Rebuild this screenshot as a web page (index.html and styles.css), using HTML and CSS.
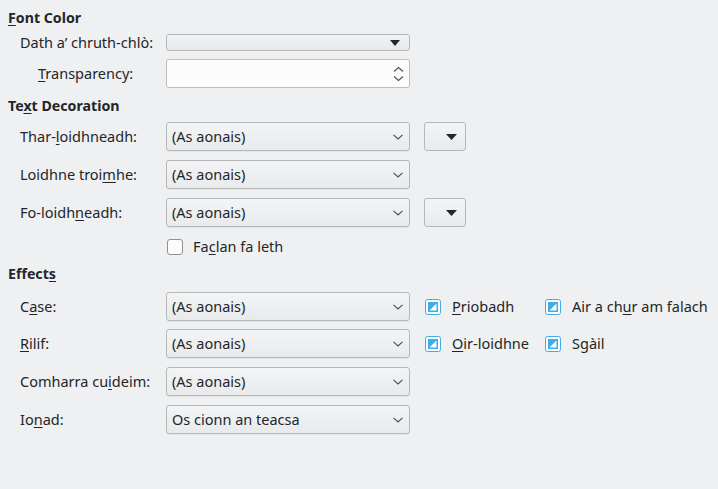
FILE: index.html
```html
<!DOCTYPE html>
<html>
<head>
<meta charset="utf-8">
<link rel="stylesheet" href="styles.css">
</head>
<body>
<div class="page">
  <div class="heading h-font"><u>F</u>ont Color</div>
  <div class="row r-dath">
    <div class="label">Dath a’ chruth-chlò:</div>
    <div class="colorbar"><svg class="tri" width="10" height="6" viewBox="0 0 10 6"><polygon points="0,0 10,0 5,6" fill="#232629"/></svg></div>
  </div>
  <div class="row r-trans">
    <div class="label indent"><u>T</u>ransparency:</div>
    <div class="spin">
      <svg class="spin-arrows" width="11" height="16" viewBox="0 0 11 16"><polyline points="1,5.5 5.5,1.5 10,5.5" fill="none" stroke="#4d4d4d" stroke-width="1.1"/><polyline points="1,10.5 5.5,14.5 10,10.5" fill="none" stroke="#4d4d4d" stroke-width="1.1"/></svg>
    </div>
  </div>

  <div class="heading h-deco">Te<u>x</u>t Decoration</div>
  <div class="row r-first">
    <div class="label">Thar-<u>l</u>oidhneadh:</div>
    <div class="select"><span>(As aonais)</span><svg class="chev" width="10" height="6" viewBox="0 0 10 6"><polyline points="0.5,0.8 5,5 9.5,0.8" fill="none" stroke="#4d4d4d" stroke-width="1.1"/></svg></div>
    <div class="colorbtn"><svg width="11" height="6" viewBox="0 0 11 6"><polygon points="0,0 11,0 5.5,6" fill="#232629"/></svg></div>
  </div>
  <div class="row r-next">
    <div class="label">Loidhne troi<u>m</u>he:</div>
    <div class="select"><span>(As aonais)</span><svg class="chev" width="10" height="6" viewBox="0 0 10 6"><polyline points="0.5,0.8 5,5 9.5,0.8" fill="none" stroke="#4d4d4d" stroke-width="1.1"/></svg></div>
  </div>
  <div class="row r-next">
    <div class="label">Fo-loidh<u>n</u>eadh:</div>
    <div class="select"><span>(As aonais)</span><svg class="chev" width="10" height="6" viewBox="0 0 10 6"><polyline points="0.5,0.8 5,5 9.5,0.8" fill="none" stroke="#4d4d4d" stroke-width="1.1"/></svg></div>
    <div class="colorbtn"><svg width="11" height="6" viewBox="0 0 11 6"><polygon points="0,0 11,0 5.5,6" fill="#232629"/></svg></div>
  </div>
  <div class="row r-check">
    <div class="label"></div>
    <div class="check"><span class="box"></span><span class="txt">Fa<u>c</u>lan fa leth</span></div>
  </div>

  <div class="heading h-eff">Effect<u>s</u></div>
  <div class="row r-first2">
    <div class="label">C<u>a</u>se:</div>
    <div class="select"><span>(As aonais)</span><svg class="chev" width="10" height="6" viewBox="0 0 10 6"><polyline points="0.5,0.8 5,5 9.5,0.8" fill="none" stroke="#4d4d4d" stroke-width="1.1"/></svg></div>
    <div class="opts">
      <div class="tcheck"><svg width="16" height="16" viewBox="0 0 16 16"><rect x="0.5" y="0.5" width="15" height="15" rx="2" fill="#fcfcfc" stroke="#3daee9"/><rect x="3" y="3" width="10" height="10" fill="#3daee9"/><polygon points="11.5,4.5 11.5,11.5 4.5,11.5" fill="#fcfcfc"/></svg><span class="txt"><u>P</u>riobadh</span></div>
      <div class="tcheck"><svg width="16" height="16" viewBox="0 0 16 16"><rect x="0.5" y="0.5" width="15" height="15" rx="2" fill="#fcfcfc" stroke="#3daee9"/><rect x="3" y="3" width="10" height="10" fill="#3daee9"/><polygon points="11.5,4.5 11.5,11.5 4.5,11.5" fill="#fcfcfc"/></svg><span class="txt">Air a ch<u>u</u>r am falach</span></div>
    </div>
  </div>
  <div class="row r-rilif">
    <div class="label"><u>R</u>ilif:</div>
    <div class="select"><span>(As aonais)</span><svg class="chev" width="10" height="6" viewBox="0 0 10 6"><polyline points="0.5,0.8 5,5 9.5,0.8" fill="none" stroke="#4d4d4d" stroke-width="1.1"/></svg></div>
    <div class="opts">
      <div class="tcheck"><svg width="16" height="16" viewBox="0 0 16 16"><rect x="0.5" y="0.5" width="15" height="15" rx="2" fill="#fcfcfc" stroke="#3daee9"/><rect x="3" y="3" width="10" height="10" fill="#3daee9"/><polygon points="11.5,4.5 11.5,11.5 4.5,11.5" fill="#fcfcfc"/></svg><span class="txt"><u>O</u>ir-loidhne</span></div>
      <div class="tcheck"><svg width="16" height="16" viewBox="0 0 16 16"><rect x="0.5" y="0.5" width="15" height="15" rx="2" fill="#fcfcfc" stroke="#3daee9"/><rect x="3" y="3" width="10" height="10" fill="#3daee9"/><polygon points="11.5,4.5 11.5,11.5 4.5,11.5" fill="#fcfcfc"/></svg><span class="txt">S<u>g</u>àil</span></div>
    </div>
  </div>
  <div class="row r-next">
    <div class="label">Comharra cu<u>i</u>deim:</div>
    <div class="select"><span>(As aonais)</span><svg class="chev" width="10" height="6" viewBox="0 0 10 6"><polyline points="0.5,0.8 5,5 9.5,0.8" fill="none" stroke="#4d4d4d" stroke-width="1.1"/></svg></div>
  </div>
  <div class="row r-next">
    <div class="label">Io<u>n</u>ad:</div>
    <div class="select"><span>Os cionn an teacsa</span><svg class="chev" width="10" height="6" viewBox="0 0 10 6"><polyline points="0.5,0.8 5,5 9.5,0.8" fill="none" stroke="#4d4d4d" stroke-width="1.1"/></svg></div>
  </div>
</div>
</body>
</html>
```

FILE: styles.css
```css
html, body {
  margin: 0;
  background: #eff0f1;
}
body {
  font-family: "Noto Sans", sans-serif;
  font-size: 14.5px;
  color: #232629;
  width: 718px;
  height: 489px;
  overflow: hidden;
}
u {
  text-decoration: underline;
  text-underline-offset: 2px;
}
.page {
  padding-top: 9px;
}
.heading {
  font-weight: bold;
  font-size: 14.2px;
  height: 18px;
  line-height: 18px;
  padding-left: 8px;
}
.h-deco { margin-top: 9px; }
.h-eff { margin-top: 8px; }

.row {
  display: flex;
  align-items: center;
  height: 29px;
}
.r-dath { margin-top: 1px; }
.r-trans { margin-top: 2px; }
.r-first { margin-top: 7px; }
.r-next { margin-top: 9px; }
.r-check { margin-top: 10px; height: 20px; }
.r-first2 { margin-top: 9px; }
.r-rilif { margin-top: 8px; }

.label {
  width: 166px;
  box-sizing: border-box;
  padding-left: 20px;
  line-height: 18px;
  padding-bottom: 2px;
  white-space: nowrap;
}
.label.indent { padding-left: 38px; }

.colorbar {
  width: 244px;
  height: 17px;
  box-sizing: border-box;
  border: 1px solid #b5b7b9;
  border-radius: 3px;
  background: linear-gradient(#f2f3f4, #e7e8e9);
  display: flex;
  align-items: center;
  justify-content: flex-end;
  padding-right: 9px;
}

.spin {
  width: 244px;
  height: 29px;
  box-sizing: border-box;
  border: 1px solid #bcbec0;
  border-radius: 3px;
  background: #fcfcfc;
  display: flex;
  align-items: center;
  justify-content: flex-end;
  padding-right: 5px;
}

.select {
  width: 244px;
  height: 29px;
  box-sizing: border-box;
  border: 1px solid #b5b7b9;
  border-radius: 3px;
  background: linear-gradient(#f3f4f5, #e9eaeb);
  box-shadow: 0 1px 0 rgba(0,0,0,0.04);
  display: flex;
  align-items: center;
  justify-content: space-between;
  padding-left: 5px;
  padding-right: 6px;
}
.select span {
  line-height: 18px;
  padding-bottom: 2px;
}

.colorbtn {
  width: 42px;
  height: 29px;
  margin-left: 14px;
  box-sizing: border-box;
  border: 1px solid #b5b7b9;
  border-radius: 3px;
  background: linear-gradient(#f3f4f5, #e9eaeb);
  display: flex;
  align-items: center;
  justify-content: flex-end;
  padding-right: 8px;
}

.txt {
  line-height: 18px;
  padding-bottom: 2px;
}

.check {
  display: flex;
  align-items: center;
  gap: 10px;
  padding-left: 1px;
}
.box {
  width: 16px;
  height: 16px;
  box-sizing: border-box;
  border: 1px solid #8e9194;
  border-radius: 3px;
  background: #fcfcfc;
}

.opts {
  display: grid;
  grid-template-columns: 120px auto;
  margin-left: 15px;
}
.tcheck {
  display: flex;
  align-items: center;
  gap: 11px;
}
.tcheck svg { flex: none; }
```
